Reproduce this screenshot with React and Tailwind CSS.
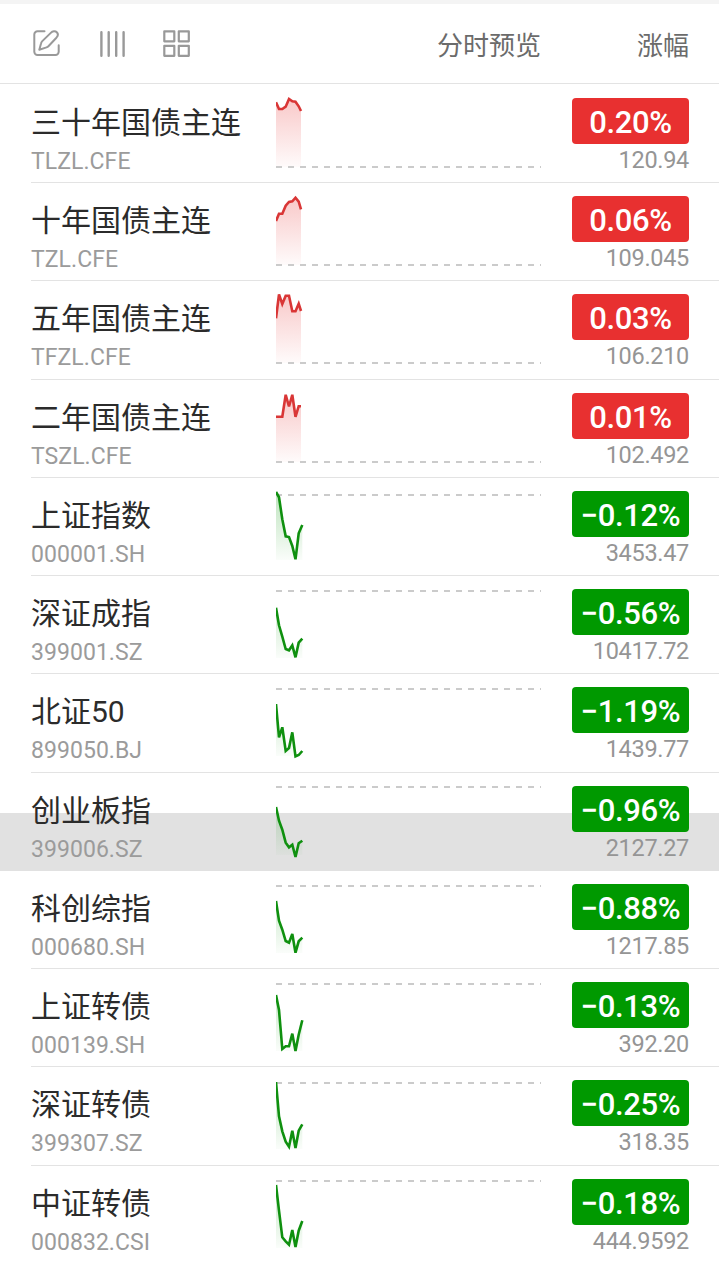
import React from "react";

const XS = [0, 3, 6.3, 9.7, 13, 16.3, 19.5, 22.7];

const ROWS = [
  { name: "三十年国债主连", code: "TLZL.CFE", pct: "0.20%", price: "120.94", up: true, base: 81.7, ys: [17.3, 24, 24, 21.7, 14, 16.3, 16.7, 21.3, 26] },
  { name: "十年国债主连", code: "TZL.CFE", pct: "0.06%", price: "109.045", up: true, base: 82, ys: [38, 30.7, 30.7, 22.7, 19, 18.3, 14.7, 18.7, 26.3] },
  { name: "五年国债主连", code: "TFZL.CFE", pct: "0.03%", price: "106.210", up: true, base: 82, ys: [37.3, 13.3, 23, 14.7, 14.7, 30.3, 30.3, 22.7, 30] },
  { name: "二年国债主连", code: "TSZL.CFE", pct: "0.01%", price: "102.492", up: true, base: 82, ys: [36.8, 36.8, 36.8, 14.8, 26.5, 14.8, 36.8, 26.2, 26.2] },
  { name: "上证指数", code: "000001.SH", pct: "−0.12%", price: "3453.47", base: 17.3, ys: [14, 19.3, 41.3, 58.3, 59, 68, 81.3, 55.3, 47] },
  { name: "深证成指", code: "399001.SZ", pct: "−0.56%", price: "10417.72", base: 14.7, ys: [31.7, 49.3, 60.7, 73, 74.3, 69.3, 81.3, 66.7, 62.7] },
  { name: "北证50", code: "899050.BJ", pct: "−1.19%", price: "1439.77", base: 15, ys: [30, 63.3, 53.3, 77, 74, 58.3, 82.3, 81, 77] },
  { name: "创业板指", code: "399006.SZ", pct: "−0.96%", price: "2127.27", base: 14, pressed: true, ys: [34, 47.7, 56.7, 69.7, 74.3, 71.7, 84, 70.3, 67.7] },
  { name: "科创综指", code: "000680.SH", pct: "−0.88%", price: "1217.85", base: 15.3, ys: [30, 49.7, 58.7, 70, 71.7, 63, 81.7, 70.3, 66.7] },
  { name: "上证转债", code: "000139.SH", pct: "−0.13%", price: "392.20", base: 15.3, ys: [26, 41, 80, 77.3, 77.3, 64.7, 82, 65.7, 51.3] },
  { name: "深证转债", code: "399307.SZ", pct: "−0.25%", price: "318.35", base: 16, ys: [15, 49.3, 64.3, 74.7, 79.7, 63.7, 81, 63.7, 57.3] },
  { name: "中证转债", code: "000832.CSI", pct: "−0.18%", price: "444.9592", base: 15, ys: [19, 44.7, 71.3, 75.3, 78.7, 64, 81, 64.7, 55] },
];

function Sparkline({ row, id }) {
  const endX = row.up ? 25 : 26.3;
  const line = row.ys.map((y, i) => `${i < 8 ? XS[i] : endX},${y}`).join(" ");
  const top = row.up ? Math.min(...row.ys) : row.base;
  return (
    <svg width="265" height="97" viewBox="0 0 265 97" className="block shrink-0">
      <defs>
        <linearGradient id={id} gradientUnits="userSpaceOnUse" x1="0" x2="0" y1={top} y2="82">
          <stop offset="0" stopColor={row.up ? "#e62e2e" : "#0a960a"} stopOpacity="0.26" />
          <stop offset="1" stopColor={row.up ? "#e62e2e" : "#0a960a"} stopOpacity="0.02" />
        </linearGradient>
      </defs>
      <polygon points={`0,82 ${line} ${endX},82`} fill={`url(#${id})`} />
      <line x1="0" x2="265" y1={Math.round(row.base)} y2={Math.round(row.base)} stroke="#cbcbcb" strokeWidth="2" strokeDasharray="6 6" />
      <polyline points={line} fill="none" stroke={row.up ? "#d93636" : "#0f900f"} strokeWidth="2.6" strokeLinejoin="miter" strokeMiterlimit="3" />
    </svg>
  );
}

function Row({ row, index, last }) {
  return (
    <div className={row.pressed ? "h-[98.25px] shrink-0 pl-[31px] bg-[linear-gradient(to_bottom,#ffffff_40px,#e1e1e1_40px)]" : "h-[98.25px] shrink-0 pl-[31px]"}>
      <div className={row.pressed || last ? "flex h-full pr-[30px]" : "flex h-full border-b border-[#e3e3e3] pr-[30px]"}>
        <div className="w-[245px] shrink-0 whitespace-nowrap pt-[19px]">
          <div className="h-[38px] text-[30px] leading-[38px] text-[#2b2b2b]">{row.name}</div>
          <div className="h-[38px] text-[23px] leading-[40px] tracking-[0.05px] text-[#9b9b9b]">{row.code}</div>
        </div>
        <Sparkline row={row} id={`fill-${index}`} />
        <div className="ml-auto flex w-[117px] flex-col items-end pt-[13px]">
          <div className={row.up ? "h-[46px] w-full shrink-0 rounded bg-[#e83030] text-center text-[31px] font-medium leading-[50px] tracking-[-0.35px] text-white" : "h-[46px] w-full shrink-0 rounded bg-[#009900] text-center text-[31px] font-medium leading-[50px] tracking-[-0.35px] text-white"}>
            {row.pct}
          </div>
          <div className="whitespace-nowrap text-[23.5px] leading-[33px] tracking-[-0.3px] text-[#959595]">{row.price}</div>
        </div>
      </div>
    </div>
  );
}

export default function App() {
  return (
    <div className="flex h-[1263px] w-[719px] flex-col overflow-hidden bg-white font-['Roboto','Noto_Sans_CJK_SC',sans-serif]">
      <div className="mb-[0.8px] h-[84px] shrink-0 border-b border-t-4 border-b-[#e3e3e3] border-t-[#f4f4f4]">
        <div className="flex h-full items-center pl-8 pr-[30px]">
          <svg width="30" height="30" viewBox="0 0 30 30" fill="none" stroke="#999999" strokeWidth="2" strokeLinecap="round" strokeLinejoin="round" className="mt-px">
            <path d="M12.5 2.3H5.5a3.2 3.2 0 0 0-3.2 3.2v17.3a3.2 3.2 0 0 0 3.2 3.2h18a3.2 3.2 0 0 0 3.2-3.2v-6.6" />
            <path d="M7.3 20.7 9.1 14.2Q9.4 13 10.3 12.1L18.8 3.9C20.6 2.1 23.3 1.8 24.8 3.2 26.2 4.6 25.9 7 24.4 8.7L16.4 17.2Q15.6 18 14.5 18.4Z" />
          </svg>
          <svg width="26" height="28" viewBox="0 0 26 28" stroke="#999999" strokeWidth="2.4" strokeLinecap="round" className="ml-[37px]">
            <path d="M2.4 2.2v23.6M9.7 2.2v23.6M17.2 2.2v23.6M24.6 2.2v23.6" />
          </svg>
          <svg width="29" height="29" viewBox="0 0 29 29" fill="none" stroke="#999999" strokeWidth="2.2" strokeLinejoin="round" className="ml-[37px]">
            <path d="M2.3 2.3h10v10h-10zM16.8 2.3h10v10h-10zM2.3 16.8h10v10h-10zM16.8 16.8h10v10h-10z" />
          </svg>
          <div className="ml-auto pt-[4px] text-[26px] leading-9 text-[#6b6b6b]">分时预览</div>
          <div className="ml-[96px] pt-[4px] text-[26px] leading-9 text-[#6b6b6b]">涨幅</div>
        </div>
      </div>
      {ROWS.map((row, i) => (
        <Row key={row.code} row={row} index={i} last={i === ROWS.length - 1} />
      ))}
    </div>
  );
}
